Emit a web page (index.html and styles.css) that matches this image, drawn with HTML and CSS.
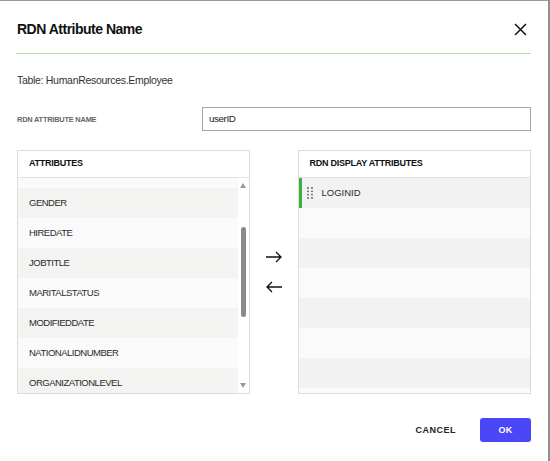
FILE: index.html
```html
<!DOCTYPE html>
<html>
<head>
<meta charset="utf-8">
<link rel="stylesheet" href="styles.css">
</head>
<body>
<div class="dialog">
  <header class="dlg-header">
    <h1 class="dlg-title">RDN Attribute Name</h1>
    <button class="close-btn" aria-label="Close">
      <svg width="13" height="13" viewBox="0 0 13 13"><path d="M1 1 L12 12 M12 1 L1 12" stroke="#111" stroke-width="1.5" fill="none"/></svg>
    </button>
  </header>
  <div class="table-name">Table: HumanResources.Employee</div>
  <div class="form-row">
    <label class="form-label">RDN ATTRIBUTE NAME</label>
    <div class="input">userID</div>
  </div>
  <div class="panels">
    <section class="panel">
      <div class="panel-head">ATTRIBUTES</div>
      <div class="panel-body">
        <div class="viewport">
          <ul class="list scrolled">
            <li class="row"></li>
            <li class="row">GENDER</li>
            <li class="row">HIREDATE</li>
            <li class="row">JOBTITLE</li>
            <li class="row">MARITALSTATUS</li>
            <li class="row">MODIFIEDDATE</li>
            <li class="row">NATIONALIDNUMBER</li>
            <li class="row">ORGANIZATIONLEVEL</li>
          </ul>
        </div>
        <div class="scrollbar">
          <span class="sb-arrow up"></span>
          <div class="sb-track"><div class="sb-thumb"></div></div>
          <span class="sb-arrow down"></span>
        </div>
      </div>
    </section>
    <div class="movers">
      <button class="mv" aria-label="Add">
        <svg width="18" height="12" viewBox="0 0 18 12"><path d="M1 6 H16 M11 1 L16 6 L11 11" stroke="#111" stroke-width="1.3" fill="none"/></svg>
      </button>
      <button class="mv" aria-label="Remove">
        <svg width="18" height="12" viewBox="0 0 18 12"><path d="M17 6 H2 M7 1 L2 6 L7 11" stroke="#111" stroke-width="1.3" fill="none"/></svg>
      </button>
    </div>
    <section class="panel right">
      <div class="panel-head">RDN DISPLAY ATTRIBUTES</div>
      <ul class="list full">
        <li class="row sel">
          <span class="grip">
            <svg width="6" height="12" viewBox="0 0 6 12"><g fill="#555"><circle cx="1" cy="1" r="0.9"/><circle cx="5" cy="1" r="0.9"/><circle cx="1" cy="4.3" r="0.9"/><circle cx="5" cy="4.3" r="0.9"/><circle cx="1" cy="7.6" r="0.9"/><circle cx="5" cy="7.6" r="0.9"/><circle cx="1" cy="10.9" r="0.9"/><circle cx="5" cy="10.9" r="0.9"/></g></svg>
          </span>
          LOGINID
        </li>
        <li class="row"></li>
        <li class="row"></li>
        <li class="row"></li>
        <li class="row"></li>
        <li class="row"></li>
        <li class="row"></li>
        <li class="row"></li>
      </ul>
    </section>
  </div>
  <footer class="dlg-footer">
    <button class="btn-cancel">CANCEL</button>
    <button class="btn-ok">OK</button>
  </footer>
</div>
</body>
</html>
```
FILE: styles.css
```css
* { box-sizing: border-box; }
html, body { margin: 0; padding: 0; background: #fff; }
body {
  font-family: "Liberation Sans", Arial, sans-serif;
  color: #222;
  width: 550px;
  height: 461px;
  overflow: hidden;
}
button { font-family: inherit; border: 0; background: none; padding: 0; cursor: pointer; }
ul { list-style: none; margin: 0; padding: 0; }

.dialog {
  height: 461px;
  border-top: 1px solid #9a9a9a;
  border-right: 2px solid #8f8f8f;
  padding: 0 17px 0 16px;
  display: flex;
  flex-direction: column;
}

.dlg-header {
  height: 53px;
  padding-top: 4px;
  display: flex;
  align-items: center;
  justify-content: space-between;
  border-bottom: 1px solid #b3dea6;
}
.dlg-title {
  margin: 0 0 0 1px;
  font-size: 14px;
  font-weight: 700;
  color: #111;
  letter-spacing: -0.5px;
}
.close-btn { width: 13px; height: 13px; margin-right: 4px; display: flex; }

.table-name {
  margin-top: 19px;
  font-size: 10.5px;
  line-height: 14px;
  color: #333;
  padding-left: 1px;
  letter-spacing: -0.3px;
}

.form-row {
  margin-top: 20px;
  display: flex;
  align-items: center;
}
.form-label {
  width: 186px;
  padding-left: 1px;
  font-size: 7.4px;
  font-weight: 700;
  color: #666;
  letter-spacing: -0.2px;
}
.input {
  flex: 1;
  height: 24px;
  border: 1px solid #a5a5a5;
  padding: 0 6px;
  font-size: 9.8px;
  line-height: 22px;
  color: #222;
  letter-spacing: -0.4px;
}

.panels {
  margin-top: 19px;
  display: flex;
  height: 244px;
}
.panel {
  width: 233px;
  margin-left: 1px;
  border: 1px solid #dcdcdc;
  display: flex;
  flex-direction: column;
}
.panel.right { width: 234px; margin-left: 0; }
.panel-head {
  height: 27px;
  flex: none;
  border-bottom: 1px solid #e2e2e2;
  padding-left: 11px;
  font-size: 9px;
  font-weight: 700;
  line-height: 25px;
  color: #111;
  letter-spacing: -0.25px;
}
.panel-body { flex: 1; display: flex; min-height: 0; }
.viewport { flex: 1; overflow: hidden; }
.list.scrolled { margin-top: -20px; }
.row {
  height: 30px;
  line-height: 30px;
  padding-left: 11px;
  font-size: 9.5px;
  color: #2b2b2b;
  letter-spacing: -0.5px;
  background: #fafafa;
  white-space: nowrap;
}
.row:nth-child(even) { background: #f3f3f1; }
.list.full { flex: 1; overflow: hidden; }
.list.full .row { background: #fafafa; }
.list.full .row:nth-child(odd) { background: #f2f2f2; }
.row.sel {
  border-left: 3px solid #3fae3c;
  padding-left: 5px;
  display: flex;
  align-items: center;
  font-size: 9.5px;
  letter-spacing: 0;
}
.grip { display: flex; width: 6px; margin-right: 9px; margin-top: -1px; }

.scrollbar {
  width: 11px;
  flex: none;
  display: flex;
  flex-direction: column;
  align-items: center;
  background: #fff;
}
.sb-arrow { width: 0; height: 0; border-left: 3.5px solid transparent; border-right: 3.5px solid transparent; }
.sb-arrow.up { border-bottom: 5px solid #999; margin-top: 5px; }
.sb-arrow.down { border-top: 5px solid #999; margin-bottom: 5px; }
.sb-track { flex: 1; width: 100%; display: flex; justify-content: center; padding-top: 39px; }
.sb-thumb { width: 5px; height: 90px; background: #8a8a8a; border-radius: 3px; }

.movers {
  width: 48px;
  flex: none;
  display: flex;
  flex-direction: column;
  align-items: center;
  padding-top: 101px;
  gap: 18px;
}
.mv { width: 18px; height: 12px; display: flex; }

.dlg-footer {
  margin-top: 24px;
  display: flex;
  justify-content: flex-end;
  align-items: center;
  gap: 24px;
}
.btn-cancel {
  font-size: 9px;
  font-weight: 700;
  color: #222;
  letter-spacing: 0.5px;
}
.btn-ok {
  width: 51px;
  height: 24px;
  border-radius: 3px;
  background: #4b46f6;
  color: #fff;
  font-size: 9px;
  font-weight: 700;
  letter-spacing: 0.3px;
}
```
